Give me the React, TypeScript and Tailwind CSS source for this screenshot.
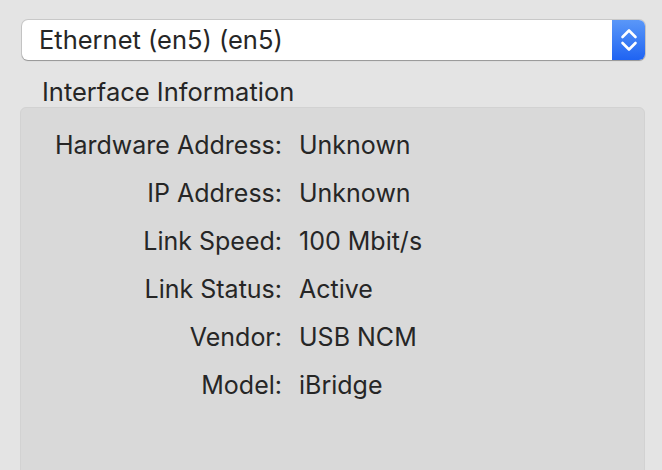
import React from "react";

const rows: [string, string][] = [
  ["Hardware Address:", "Unknown"],
  ["IP Address:", "Unknown"],
  ["Link Speed:", "100 Mbit/s"],
  ["Link Status:", "Active"],
  ["Vendor:", "USB NCM"],
  ["Model:", "iBridge"],
];

export default function App() {
  return (
    <div
      className="w-[662px] h-[470px] overflow-hidden bg-[#e4e4e4] text-[#262626] pt-[20px] pl-[22px] pr-[17px]"
      style={{ fontFamily: "Inter, 'Liberation Sans', sans-serif" }}
    >
      {/* Popup button */}
      <div className="flex h-[40px] rounded-[6px] bg-white shadow-[0_0_0_1px_rgba(0,0,0,0.12),0_1px_1px_rgba(0,0,0,0.25)] overflow-hidden">
        <div className="flex-1 flex items-center pl-[17px] text-[25.5px] leading-none">
          Ethernet (en5) (en5)
        </div>
        <div className="w-[33px] flex items-center justify-center bg-gradient-to-b from-[#5a97f8] to-[#1f63f2]">
          <svg width="18" height="26" viewBox="0 0 18 26" fill="none" stroke="white" strokeWidth="2.6" strokeLinecap="round" strokeLinejoin="round">
            <path d="M2.5 10 L9 3.5 L15.5 10" />
            <path d="M2.5 16 L9 22.5 L15.5 16" />
          </svg>
        </div>
      </div>

      {/* Box title */}
      <div className="pl-[20px] mt-[17px] text-[25.5px] leading-[30px]">Interface Information</div>

      {/* Box */}
      <div className="-ml-[2px] mt-[0px] h-[400px] rounded-[6px] bg-[#d9d9d9] border border-[#d2d2d2] pt-[14px]">
        {rows.map(([label, value]) => (
          <div key={label} className="flex items-center h-[48px] text-[25px]">
            <div className="w-[261px] text-right">{label}</div>
            <div className="pl-[17px]">{value}</div>
          </div>
        ))}
      </div>
    </div>
  );
}
